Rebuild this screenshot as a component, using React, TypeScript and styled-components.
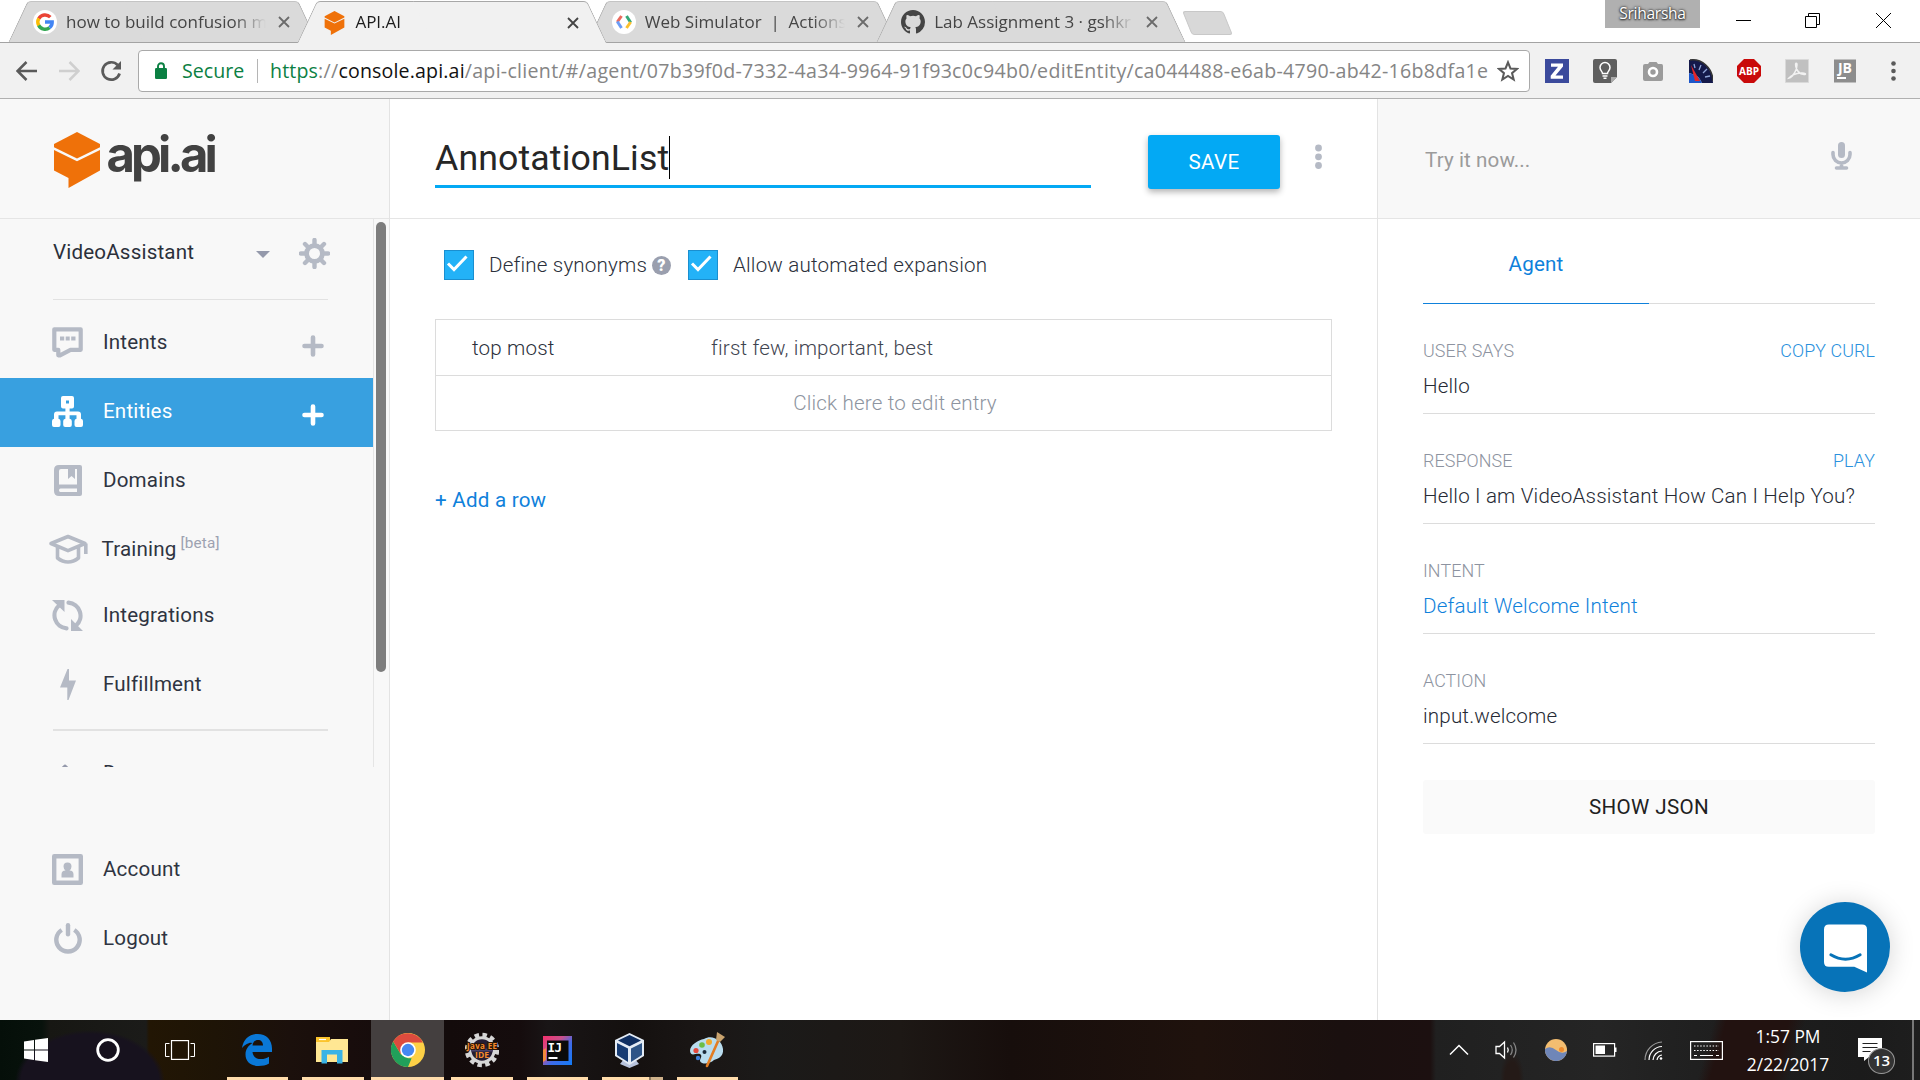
import React from "react";
import styled, { createGlobalStyle } from "styled-components";

const ui = `"Open Sans", "Noto Sans", sans-serif`;
const roboto = `Roboto, "Liberation Sans", sans-serif`;

const Global = createGlobalStyle`
  * { box-sizing: border-box; }
  html, body { margin: 0; padding: 0; overflow: hidden; background: #fff; }
  svg { display: block; flex: none; }
`;

const Screen = styled.div`
  width: 1920px;
  height: 1080px;
  display: flex;
  flex-direction: column;
  font-family: ${roboto};
  color: #2b303b;
  overflow: hidden;
`;

/* ---------- browser tabs ---------- */

const TabStrip = styled.div`
  height: 43px;
  flex: none;
  display: flex;
  align-items: flex-start;
  padding-left: 18px;
  background: #fff;
  border-bottom: 1px solid #a3a3a3;
`;

const Tab = styled.div<{ $active?: boolean }>`
  position: relative;
  z-index: ${(p) => (p.$active ? 2 : 1)};
  isolation: isolate;
  width: 289.4px;
  height: ${(p) => (p.$active ? 43 : 42)}px;
  flex: none;
  display: flex;
  align-items: center;
  padding: 2px 17.5px 0 15px;
  &::before,
  &::after {
    content: "";
    position: absolute;
    z-index: -1;
    top: 1px;
    bottom: 0;
    background: ${(p) => (p.$active ? "#f1f1f1" : "#dadada")};
    border-top: 1px solid ${(p) => (p.$active ? "#a8a8a8" : "#c4c4c4")};
  }
  &::before {
    left: 0;
    right: 40%;
    transform: skewX(-25deg);
    border-left: 1.5px solid #aaa;
    border-top-left-radius: 4px;
  }
  &::after {
    right: 0;
    left: 40%;
    transform: skewX(25deg);
    border-right: 1.5px solid #aaa;
    border-top-right-radius: 4px;
  }
`;

const TabIcon = styled.span`
  width: 24px;
  display: flex;
  justify-content: center;
`;

const TabTitle = styled.span<{ $active?: boolean }>`
  flex: 1;
  margin: -1px 0 0 9px;
  white-space: pre;
  font: 400 17px/26px ${ui};
  color: ${(p) => (p.$active ? "#1c1c1c" : "#454545")};
  mask-image: linear-gradient(to right, #000 168px, transparent 200px);
`;

const NewTab = styled.div`
  width: 41px;
  height: 24px;
  margin: 11px 0 0 11px;
  background: #d8d8d8;
  border: 1px solid #c8c8c8;
  border-radius: 3px;
  transform: skewX(22deg);
`;

const WindowControls = styled.div`
  margin-left: auto;
  display: flex;
  align-items: flex-start;
`;

const UserBadge = styled.div`
  width: 95px;
  height: 28px;
  background: #b0b0b0;
  color: #fff;
  font: 400 15.6px/27px ${ui};
  letter-spacing: -0.3px;
  text-align: center;
  text-shadow: 0 0 2px #333, 0 1px 2px #333, 0 0 3px #444;
`;

const ControlIcon = styled.div<{ $w: number; $indent?: number }>`
  width: ${(p) => p.$w}px;
  height: 41px;
  padding-left: ${(p) => p.$indent ?? 0}px;
  display: flex;
  align-items: center;
  justify-content: center;
`;

/* ---------- browser toolbar ---------- */

const Toolbar = styled.div`
  height: 56px;
  flex: none;
  display: flex;
  align-items: center;
  background: #f1f1f1;
  border-bottom: 1px solid #b0b0b0;
`;

const NavButtons = styled.div`
  width: 138px;
  padding-left: 16px;
  display: flex;
  align-items: center;
  gap: 19.5px;
`;

const AddressBar = styled.div`
  width: 1392px;
  height: 42px;
  display: flex;
  align-items: center;
  padding: 0 10px 0 16px;
  background: #fff;
  border: 1px solid #a9a9a9;
  border-radius: 4px;
  font: 400 19.6px/38px ${ui};
`;

const Secure = styled.span`
  color: #0b8043;
  margin-left: 15px;
  width: 75px;
`;

const Divider = styled.span`
  width: 1px;
  height: 24px;
  background: #b5b5b5;
  margin-right: 12px;
`;

const Url = styled.span`
  width: 1217px;
  white-space: nowrap;
  color: #858585;
  letter-spacing: 0.28px;
  margin-right: 10px;
`;

const Scheme = styled.span`
  color: #0b8043;
  letter-spacing: 0.15px;
`;

const Host = styled.span`
  color: #111;
  letter-spacing: 0.15px;
`;

const Extensions = styled.div`
  display: flex;
  align-items: center;
  gap: 24px;
  margin-left: 15px;
`;

/* ---------- page frame ---------- */

const Page = styled.div`
  height: 921px;
  flex: none;
  display: flex;
  background: #fff;
  letter-spacing: 0.17px;
`;

const Sidebar = styled.aside`
  width: 390px;
  flex: none;
  display: flex;
  flex-direction: column;
  background: #f8f8f8;
  border-right: 1px solid #e3e3e3;
`;

const Brand = styled.div`
  height: 120px;
  flex: none;
  display: flex;
  padding: 33px 0 0 54px;
  border-bottom: 1px solid #e5e5e5;
`;

const BrandName = styled.span`
  margin: -5px 0 0 6.5px;
  font: 700 49px/56px Inter, "Liberation Sans", sans-serif;
  letter-spacing: -3.9px;
  color: #424242;
`;

const ScrollArea = styled.div`
  height: 548px;
  flex: none;
  display: flex;
  overflow: hidden;
`;

const Menu = styled.nav`
  width: 374px;
  flex: none;
  border-right: 1px solid #e5e5e5;
`;

const ScrollThumb = styled.div`
  width: 10px;
  height: 450px;
  margin: 3px 0 0 2px;
  border-radius: 5px;
  background: #7d7d7d;
`;

const AgentRow = styled.div`
  height: 81px;
  display: flex;
  align-items: flex-start;
  margin: 0 45px 9px 53px;
  border-bottom: 1px solid #e2e2e2;
  font-size: 20.6px;
  line-height: 24px;
`;

const AgentName = styled.span`
  width: 203px;
  padding-top: 21px;
`;

const Caret = styled.span`
  border: 7px solid transparent;
  border-top-color: #9499ab;
  border-bottom: 0;
  margin: 32px 29px 0 0;
`;

const GearSlot = styled.span`
  margin-right: -3px;
  padding-top: 19px;
`;

const MenuRow = styled.div<{ $active?: boolean; $short?: boolean }>`
  width: 373px;
  height: ${(p) => (p.$short ? 66 : 69)}px;
  display: flex;
  align-items: center;
  padding: 0 49px ${(p) => (p.$short ? 0 : 3)}px 47.5px;
  font-size: 20.6px;
  line-height: 24px;
  font-weight: 400;
  background: ${(p) => (p.$active ? "#38a0e0" : "transparent")};
  color: ${(p) => (p.$active ? "#fff" : "#2f3441")};
`;

const IconSlot = styled.span<{ $tight?: boolean }>`
  width: 40px;
  display: flex;
  justify-content: center;
  margin-right: ${(p) => (p.$tight ? 14 : 15.5)}px;
`;

const PlusSlot = styled.span`
  margin: 7px 0 0 auto;
`;

const Beta = styled.sup`
  margin: -12px 0 0 4px;
  font-size: 15.3px;
  line-height: 18px;
  color: #9da2b1;
`;

const MenuRule = styled.div`
  height: 2px;
  margin: 9px 45px 9px 53px;
  background: #e2e2e2;
`;

const Footer = styled.div`
  padding-top: 69px;
`;

/* ---------- entity editor ---------- */

const Editor = styled.main`
  width: 987px;
  flex: none;
`;

const EditorHead = styled.header`
  height: 120px;
  display: flex;
  align-items: flex-start;
  padding-left: 45px;
  border-bottom: 1px solid #e5e5e5;
`;

const NameField = styled.div`
  width: 656px;
  height: 89px;
  display: flex;
  padding-top: 37px;
  border-bottom: 3px solid #03a9f4;
  font-size: 35.7px;
  line-height: 45px;
  letter-spacing: 0.12px;
  color: #262626;
`;

const TextCursor = styled.span`
  width: 1px;
  height: 43px;
  background: #000;
`;

const SaveButton = styled.button`
  width: 132px;
  height: 54px;
  margin: 36px 35px 0 57px;
  padding: 0;
  border: 0;
  border-radius: 3px;
  background: #03a9f4;
  color: #fff;
  font: 450 20.6px/54px ${roboto};
  letter-spacing: 0.35px;
  box-shadow: 0 3px 6px rgba(0, 0, 0, 0.3);
`;

const DotsSlot = styled.span`
  padding-top: 45px;
`;

const Options = styled.div`
  display: flex;
  align-items: center;
  height: 30px;
  margin: 31px 0 39px 54px;
  font-size: 20.6px;
  font-weight: 300;
  line-height: 30px;
`;

const Checkbox = styled.span`
  width: 30px;
  height: 30px;
  margin-right: 15px;
  border: 1px solid #1a8fd0;
  background: #23b2f7;
`;

const HelpIcon = styled.span`
  width: 19px;
  height: 19px;
  margin: 0 17px 0 auto;
  border-radius: 50%;
  background: #9a9fae;
  color: #fff;
  font: 900 16px/19px ${roboto};
  text-align: center;
`;

const SynonymsOption = styled.div`
  display: flex;
  align-items: center;
  width: 244px;
`;

const AutoOption = styled.div`
  display: flex;
  align-items: center;
`;

const EntryTable = styled.div`
  width: 897px;
  margin-left: 45px;
  border: 1px solid #dcdcdc;
  font-size: 20.6px;
  font-weight: 300;
  line-height: 24px;
`;

const EntryRow = styled.div<{ $hint?: boolean }>`
  height: 55px;
  display: flex;
  align-items: center;
  justify-content: ${(p) => (p.$hint ? "center" : "flex-start")};
  padding: 0 0 0 ${(p) => (p.$hint ? 23 : 36)}px;
  color: ${(p) => (p.$hint ? "#8d94a0" : "#3f4450")};
  & + & {
    border-top: 1px solid #dcdcdc;
  }
`;

const EntryKey = styled.span`
  width: 239px;
  color: #2b303b;
`;

const AddRow = styled.a`
  display: block;
  margin: 57px 0 0 45px;
  font-size: 20.6px;
  line-height: 24px;
  letter-spacing: 0.22px;
  color: #0f81db;
`;

/* ---------- test console ---------- */

const Console = styled.section`
  width: 543px;
  border-left: 1px solid #e3e3e3;
`;

const ConsoleHead = styled.div`
  height: 120px;
  display: flex;
  justify-content: space-between;
  align-items: flex-start;
  padding: 43px 68px 0 47px;
  background: #f8f8f8;
  border-bottom: 1px solid #e5e5e5;
  font-size: 20.6px;
  line-height: 36px;
  letter-spacing: 0.1px;
  color: #9b9b9b;
`;

const ConsoleBody = styled.div`
  padding: 0 45px;
`;

const AgentTabs = styled.div`
  height: 85px;
  display: flex;
  border-bottom: 1px solid #dcdcdc;
`;

const AgentTab = styled.div`
  width: 226px;
  height: 85px;
  border-bottom: 1px solid #0f81db;
  color: #0f81db;
  font-size: 20.6px;
  line-height: 91px;
  text-align: center;
`;

const Block = styled.div`
  height: 110px;
  padding-top: 35px;
  border-bottom: 1px solid #dcdcdc;
  font-weight: 300;
`;

const BlockHead = styled.div`
  display: flex;
  justify-content: space-between;
  font-size: 17.9px;
  line-height: 24px;
  letter-spacing: 0.08px;
  color: #8d93a0;
`;

const BlockLink = styled.a`
  color: #2a91dd;
`;

const BlockValue = styled.div<{ $link?: boolean }>`
  margin-top: 11px;
  font-size: 20.6px;
  line-height: 24px;
  letter-spacing: 0.17px;
  white-space: nowrap;
  color: ${(p) => (p.$link ? "#0f81db" : "#262a35")};
`;

const JsonButton = styled.button`
  display: block;
  width: 452px;
  height: 54px;
  margin-top: 36px;
  padding: 0;
  border: 0;
  border-radius: 3px;
  background: #fafafa;
  color: #212121;
  font: 400 20.6px/54px ${roboto};
  letter-spacing: 0.35px;
`;

const ChatBubble = styled.div`
  width: 90px;
  height: 90px;
  margin: 68px -15px 0 auto;
  padding: 3px 0 0 1px;
  border-radius: 50%;
  background: #0773b8;
  box-shadow: 0 2px 26px rgba(0, 0, 0, 0.17);
  display: flex;
  align-items: center;
  justify-content: center;
`;

/* ---------- taskbar ---------- */

const Taskbar = styled.footer`
  height: 60px;
  flex: none;
  display: flex;
  background:
    radial-gradient(ellipse 75px 52px at 90px 62px, #17121e 92%, transparent 100%),
    radial-gradient(ellipse 12px 30px at 1512px 60px, #241a17 60%, transparent 100%),
    linear-gradient(106deg, transparent 1648px, #221210 1660px, #221210 1720px, transparent 1736px),
    linear-gradient(90deg, #050f09 0, #08120c 42px, #171713 50px, #1b1b19 146px, #221604 149px, #1e1406 215px,
      #1b100c 290px, #180d0c 350px, #130b0b 450px, #150c0d 520px, #191516 548px, #14100f 630px, #1a1615 700px,
      #1b1a19 770px, #1d1815 900px, #170e0c 1010px, #1f120d 1200px, #1a100f 1340px, #1c1010 1430px,
      #202020 1436px, #252525 1600px, #222 1650px, #1e1e1e 1740px, #1b1b1b 1860px, #1e1e1e 1920px);
  color: #fff;
`;

const TaskItem = styled.div<{ $w: number; $open?: boolean; $active?: boolean; $stacked?: boolean; $end?: number }>`
  width: ${(p) => p.$w}px;
  height: 60px;
  flex: none;
  display: flex;
  align-items: center;
  justify-content: center;
  position: relative;
  padding-right: ${(p) => p.$end ?? 0}px;
  background: ${(p) => (p.$active ? "#443f3f" : "transparent")};
  &::after {
    content: "";
    display: ${(p) => (p.$open ? "block" : "none")};
    position: absolute;
    bottom: 0;
    left: ${(p) => (p.$active ? 0 : 7)}px;
    right: ${(p) => (p.$active ? 0 : 7)}px;
    height: 3px;
    background: ${(p) =>
      p.$stacked ? "linear-gradient(90deg, #ffdcab 47px, #8c7a60 47px, #8c7a60 49px, #cfb28b 49px)" : "#ffdcab"};
  }
`;

const Tray = styled.div`
  margin-left: auto;
  display: flex;
  align-items: center;
`;

const TraySlot = styled.div<{ $w: number }>`
  width: ${(p) => p.$w}px;
  display: flex;
  justify-content: center;
`;

const Clock = styled.div`
  width: 102px;
  font: 400 17.4px/28px ${ui};
  text-align: center;
  white-space: nowrap;
  padding-bottom: 1px;
`;

const Notifications = styled.div`
  width: 57px;
  height: 60px;
  margin-left: 7px;
  position: relative;
  padding: 18px 0 0 12px;
`;

const Count = styled.span`
  position: absolute;
  left: 22px;
  top: 28px;
  width: 27px;
  height: 26px;
  border: 1.5px solid #999;
  border-radius: 50%;
  background: #333;
  font: 600 15px/23px ${ui};
  text-align: center;
`;

const Peek = styled.div`
  width: 8px;
  height: 60px;
  margin-left: 9px;
  border-left: 2px solid #777;
`;

/* ---------- drawings ---------- */

const grey = "#b5bac5";

const CloseX = ({ color = "#666" }: { color?: string }) => (
  <svg width="12" height="12" viewBox="0 0 12 12" stroke={color} strokeWidth="1.8">
    <path d="M1 1l10 10M11 1L1 11" />
  </svg>
);

const GoogleIcon = () => (
  <svg width="24" height="24" viewBox="0 0 24 24" fill="none" strokeWidth="3.4">
    <circle cx="12" cy="12" r="12" fill="#fff" />
    <path d="M17.3 7.2A7.2 7.2 0 0 0 5.8 8.6" stroke="#ea4335" />
    <path d="M5.8 8.4a7.2 7.2 0 0 0 0 7.2" stroke="#fbbc05" />
    <path d="M5.7 15.4a7.2 7.2 0 0 0 10.9 2.2" stroke="#34a853" />
    <path d="M16.6 17.6A7 7 0 0 0 19.2 12H12" stroke="#4285f4" />
  </svg>
);

const Box = ({ w, h }: { w: number; h: number }) => (
  <svg width={w} height={h} viewBox="0 0 46 56" fill="#ef7109">
    <path d="M23 0L46 12v3.2L23 26.6 0 15.2V12z" />
    <path d="M0 18l23 11.3L46 18v20.5L14.5 56V46L0 38.5z" />
  </svg>
);

const ActionsIcon = () => (
  <svg width="24" height="24" viewBox="0 0 24 24" fill="none" strokeWidth="3">
    <circle cx="12" cy="12" r="12" fill="#fff" />
    <path d="M9.5 6L5.3 12" stroke="#ea6a5e" />
    <path d="M5.3 11.5l4.2 6.5" stroke="#6b9cf5" />
    <path d="M14.5 6l4.2 6.5" stroke="#34a879" />
    <path d="M18.7 12l-4.2 6" stroke="#fbc02d" />
  </svg>
);

const GithubIcon = () => (
  <svg width="24" height="24" viewBox="0 0 16 16" fill="#444">
    <path d="M8 0C3.58 0 0 3.58 0 8c0 3.54 2.29 6.53 5.47 7.59.4.07.55-.17.55-.38 0-.19-.01-.82-.01-1.49-2.01.37-2.53-.49-2.69-.94-.09-.23-.48-.94-.82-1.13-.28-.15-.68-.52-.01-.53.63-.01 1.08.58 1.23.82.72 1.21 1.87.87 2.33.66.07-.52.28-.87.51-1.07-1.78-.2-3.64-.89-3.64-3.95 0-.87.31-1.59.82-2.15-.08-.2-.36-1.02.08-2.12 0 0 .67-.21 2.2.82a7.6 7.6 0 0 1 4 0c1.53-1.04 2.2-.82 2.2-.82.44 1.1.16 1.92.08 2.12.51.56.82 1.27.82 2.15 0 3.07-1.87 3.75-3.65 3.95.29.25.54.73.54 1.48 0 1.07-.01 1.93-.01 2.2 0 .21.15.46.55.38A8 8 0 0 0 16 8c0-4.42-3.58-8-8-8z" />
  </svg>
);

const Arrow = ({ color, flip }: { color: string; flip?: boolean }) => (
  <svg width="22" height="22" viewBox="0 0 22 22" fill="none" stroke={color} strokeWidth="2.5">
    <path d={flip ? "M1 11h19M11.5 2l9 9-9 9" : "M21 11H2M10.5 2l-9 9 9 9"} />
  </svg>
);

const Reload = () => (
  <svg width="24" height="24" viewBox="0 0 24 24" fill="none" stroke="#5a5a5a" strokeWidth="2.7">
    <path d="M20.6 14.5A8.7 8.7 0 1 1 18.6 6" />
    <path d="M22 2v8.5h-8.5z" fill="#5a5a5a" stroke="none" />
  </svg>
);

const Lock = () => (
  <svg width="12" height="17" viewBox="0 0 12 17">
    <rect y="6" width="12" height="11" rx="1.2" fill="#0b8043" />
    <path d="M3 7V4.2a3 3 0 0 1 6 0V7" fill="none" stroke="#0b8043" strokeWidth="1.9" />
  </svg>
);

const Star = () => (
  <svg width="22" height="22" viewBox="0 0 24 24" fill="none" stroke="#5a5a5a" strokeWidth="2.2">
    <path d="M12 2.5l2.7 6.7 7.200.5-5.5 4.6 1.8 7L12 17.4l-6.2 3.9 1.8-7L2.1 9.700l7.2-.5z" />
  </svg>
);

const svgText = (size: number, weight = 700) => ({
  fontFamily: "Open Sans, sans-serif",
  fontSize: size,
  fontWeight: weight,
});

const ExtensionIcons = () => (
  <Extensions>
    <svg width="24" height="24" viewBox="0 0 24 24">
      <path d="M0 0h24v24H0z" fill="#3b4a9c" />
      <path d="M6 4.5h12v3L10.5 16.5H18v3.2H5.7v-3L13 7.700H6z" fill="#fff" />
    </svg>
    <svg width="24" height="24" viewBox="0 0 24 24">
      <path d="M2 0h20q2 0 2 2v16l-6 6H2q-2 0-2-2V2q0-2 2-2z" fill="#5f5f5f" />
      <path d="M18 24v-6h6z" fill="#aaa" />
      <path d="M9.5 14.5c0-2-2.5-3-2.5-6a5 5 0 0 1 10 0c0 3-2.5 4-2.5 6zM9.5 17h5M10.5 19.3h3" fill="none" stroke="#fff" strokeWidth="1.5" />
    </svg>
    <svg width="24" height="24" viewBox="0 0 24 24">
      <path d="M7 5l1.5-2h7L17 5h3.500Q22 5 22 7v13q0 2-2 2H4q-2 0-2-2V7q0-2 2-2z" fill="#9b9b9b" />
      <circle cx="12" cy="13" r="4" fill="#9b9b9b" stroke="#fff" strokeWidth="2.6" />
    </svg>
    <svg width="24" height="24" viewBox="0 0 24 24">
      <path d="M0 1C13-1 24 9 24 24H13Q10 16 0 14z" fill="#14194a" />
      <path d="M0 14q10 2 13 10H0z" fill="#1d56c9" />
      <path d="M5 5l1 4M12 6l-2 5M18 10l-4 4M21 17l-5 1" stroke="#8fa5d8" strokeWidth="1.3" />
      <path d="M2 6l4 16h5z" fill="#e5262a" />
      <path d="M1 1C13-.5 23.500 9 24 22" stroke="#333" strokeWidth="1.5" fill="none" />
    </svg>
    <svg width="24" height="24" viewBox="0 0 24 24">
      <path d="M7 0h10l7 7v10l-7 7H7l-7-7V7z" fill="#c90a0a" />
      <text x="12" y="16" textAnchor="middle" fill="#fff" {...svgText(11)} textLength="20" lengthAdjust="spacingAndGlyphs">ABP</text>
    </svg>
    <svg width="24" height="24" viewBox="0 0 24 24">
      <path d="M.5.5h23v23H.5z" fill="#c0c0c0" stroke="#d9d9d9" />
      <path d="M4 19c4-1 8-8 8-13 0-3-2-2-1.300 1 1 5 4 8 8.300 8.500 3 0 1-2-3-1.500-4 .3-9 1.500-12 5z" fill="none" stroke="#f2f2f2" strokeWidth="1.5" />
    </svg>
    <svg width="24" height="24" viewBox="0 0 24 24">
      <path d="M1 .5h22v23H1z" fill="#8d8d8d" />
      <text x="12" y="13.5" textAnchor="middle" fill="#fff" {...svgText(14)}>JB</text>
      <path d="M4 18h9v2H4z" fill="#fff" />
    </svg>
    <svg width="24" height="24" viewBox="0 0 24 24" fill="#5a5a5a">
      <circle cx="12.5" cy="4.5" r="2.3" />
      <circle cx="12.5" cy="12" r="2.3" />
      <circle cx="12.5" cy="19.5" r="2.3" />
    </svg>
  </Extensions>
);

const Gear = () => (
  <svg width="31" height="31" viewBox="0 0 31 31" fill="none" stroke={grey}>
    <circle cx="15.5" cy="15.5" r="7.9" strokeWidth="4.8" />
    <path
      d="M15.5 2v4M15.5 25v4M2 15.5h4M25 15.5h4M6 6l2.7 2.7M22.3 22.300L25 25M25 6l-2.7 2.7M6 25l2.7-2.7"
      strokeWidth="4.4"
      strokeLinecap="round"
    />
  </svg>
);

const Plus = ({ color = grey }: { color?: string }) => (
  <svg width="22" height="22" viewBox="0 0 22 22" stroke={color} strokeWidth="4.6" strokeLinecap="round">
    <path d="M11 2.5v17M2.500 11h17" />
  </svg>
);

const IntentsIcon = () => (
  <svg width="31" height="31" viewBox="0 0 31 31" fill="none" stroke={grey}>
    <path d="M2.300 2.300h26.400v20.500H18.500L8 28.300H6.300v-5.500h-4z" strokeWidth="4.2" strokeLinejoin="round" />
    <path d="M8 11.500h4.200M13.700 11.500h4M19.200 11.500h4.300" strokeWidth="4.2" />
  </svg>
);

const EntitiesIcon = () => (
  <svg width="31" height="31" viewBox="0 0 31 31" fill="#fff">
    <path d="M11 0h9q2 0 2 2v8.500q0 2-2 2h-2.400v3H26q3 0 3 3v4.300q2 .4 2 2.200v4q0 2-2 2h-4.500q-2 0-2-2v-4q0-1.800 2-2.200v-3.500h-6.900v3.500q2.200.4 2.200 2.200v4q0 2-2 2h-4.600q-2 0-2-2v-4q0-1.800 2.200-2.200v-3.500H6.500v3.500q2 .4 2 2.200v4q0 2-2 2H2q-2 0-2-2v-4q0-1.800 2-2.200v-4.300q0-3 3-3h8.400v-3H11q-2 0-2-2V2q0-2 2-2z" />
    <path d="M14 4.500h3v3h-3z" fill="#38a0e0" />
  </svg>
);

const DomainsIcon = () => (
  <svg width="28" height="31" viewBox="0 0 28 31">
    <path
      fillRule="evenodd"
      fill={grey}
      d="M5 0h21q2 0 2 2v27q0 2-2 2H5q-5 0-5-5V5q0-5 5-5zM7 4q-2 0-2 2v13.500h18V4h-2v10l-3.500-3-3.500 3V4zM6.500 23.500q-1.500 0-1.500 1.800t1.500 1.700H23v-3.500z"
    />
  </svg>
);

const TrainingIcon = () => (
  <svg width="40" height="30" viewBox="0 0 40 30" fill="none" stroke={grey} strokeWidth="3.6" strokeLinejoin="round">
    <path d="M3 9.500L20 2.500l17 7-17 7.200z" />
    <path d="M9.500 13v11q5 4 10.500 4t10.500-4V13M37.800 9.500V20" />
  </svg>
);

const IntegrationsIcon = () => (
  <svg width="31" height="31" viewBox="0 0 31 31">
    <path d="M14.500 28.300A13 13 0 0 1 7 5.500M16.500 2.700A13 13 0 0 1 24 25.500" fill="none" stroke={grey} strokeWidth="4.2" strokeLinecap="round" />
    <path d="M0 0h12.500v12zM31 31H19V19z" fill={grey} />
  </svg>
);

const BoltIcon = () => (
  <svg width="16" height="31" viewBox="0 0 16 31" fill={grey}>
    <path d="M7.500 0H9v11.500h7L8.500 31H7.300V18.500H0z" />
  </svg>
);

const DocsIcon = () => (
  <svg width="31" height="31" viewBox="0 0 31 31" fill="none" stroke="#9499ab" strokeWidth="4.5" strokeLinejoin="round">
    <path d="M13 9l9 9-9 9-9-9z" />
  </svg>
);

const AccountIcon = () => (
  <svg width="31" height="31" viewBox="0 0 31 31">
    <rect x="2.2" y="2.2" width="26.6" height="26.6" fill="none" stroke={grey} strokeWidth="4.4" strokeLinejoin="round" />
    <path d="M9.500 23.500v-3q0-4 4-4-2-1.500-2-4a4 4 0 0 1 8 0q0 2.500-2 4 4 0 4 4v3z" fill={grey} />
  </svg>
);

const LogoutIcon = () => (
  <svg width="28" height="31" viewBox="0 0 28 31" fill="none" stroke={grey} strokeWidth="4.4">
    <path d="M7.700 7A11.700 11.700 0 1 0 20.300 7" />
    <path d="M14 2.200v9" strokeLinecap="round" />
  </svg>
);

const Check = () => (
  <svg width="28" height="28" viewBox="0 0 28 28" fill="none" stroke="#fff" strokeWidth="3">
    <path d="M3 12.500l6 6L21.500 5.500" />
  </svg>
);

const Dots = () => (
  <svg width="7" height="26" viewBox="0 0 7 26" fill={grey}>
    <circle cx="3.5" cy="4" r="3.4" />
    <circle cx="3.5" cy="12.8" r="3.4" />
    <circle cx="3.5" cy="21.5" r="3.4" />
  </svg>
);

const Mic = () => (
  <svg width="21" height="28" viewBox="0 0 21 28">
    <rect x="7" y="0" width="7" height="16" rx="3.5" fill={grey} />
    <path d="M2 10.500v2a8.500 8.500 0 0 0 17 0v-2M10.500 21v4M5.500 26h10" fill="none" stroke={grey} strokeWidth="3.6" strokeLinecap="round" />
  </svg>
);

const ChatIcon = () => (
  <svg width="43" height="50" viewBox="0 0 44 50">
    <path d="M5 0h34q5 0 5 5v44l-13-5.800H5q-5 0-5-5V5q0-5 5-5z" fill="#fff" />
    <path d="M7 31q15 9 30 0" fill="none" stroke="#0773b8" strokeWidth="3" strokeLinecap="round" />
  </svg>
);

const WindowsIcon = () => (
  <svg width="24" height="24" viewBox="0 0 24 24" fill="#fff">
    <path d="M0 3.500L10 2v9.500H0zM11 1.800L24 0v11.500H11zM0 12.500h10V22L0 20.500zM11 12.500h13V24l-13-1.800z" />
  </svg>
);

const CortanaIcon = () => (
  <svg width="24" height="24" viewBox="0 0 24 24">
    <circle cx="12" cy="12" r="10.3" fill="none" stroke="#fff" strokeWidth="2.8" />
  </svg>
);

const TaskViewIcon = () => (
  <svg width="30" height="20" viewBox="0 0 30 20" fill="none" stroke="#fff">
    <rect x="6.5" y=".6" width="17" height="18.8" strokeWidth="1.2" />
    <path d="M4.500 3.500h-4v13h4M25.500 3.500h4v13h-4" />
  </svg>
);

const EdgeIcon = () => (
  <svg width="30" height="32" viewBox="0 0 30 32" fill="#0a78d7">
    <path d="M0 14C1.500 5 7.500 0 15.500 0 24.500 0 30 6 30 14.500V18H10.500c.5 5 4 7 8.500 7 3 0 5.500-.8 8-2.300v6.800c-3 1.800-6.500 2.500-10.500 2.500C8.500 32 3.500 27.500 3.500 20.500c0-5.500 3-9.500 8-12C6.500 8.500 2.500 10.500 0 14zm10.500-2.500H21c0-3.500-2-5.500-5-5.500s-5 2-5.500 5.500z" />
  </svg>
);

const FolderIcon = () => (
  <svg width="32" height="27" viewBox="0 0 32 27">
    <path d="M0 0h14v5H0z" fill="#fbc42c" />
    <path d="M3 2.500h7" stroke="#fff" strokeWidth="1.2" />
    <path d="M0 5h13l2-3h17v23H0z" fill="#ffe793" />
    <path d="M5.500 13h21v13.500H21V17.500H11v9H5.500z" fill="#3ab3e5" />
  </svg>
);

const ChromeIcon = () => (
  <svg width="34" height="34" viewBox="0 0 33 33">
    <circle cx="16.5" cy="16.5" r="16.5" fill="#fdd046" />
    <path d="M16.500 33A16.500 16.500 0 0 1 2.200 8.200L9.500 20.600l7 4 3.500 0L16.500 33z" fill="#21a05a" />
    <path d="M2.200 8.200a16.500 16.500 0 0 1 28.700 1H16.500L9.400 20.500z" fill="#dd4b3e" />
    <circle cx="16.5" cy="16.5" r="7.6" fill="#fff" />
    <circle cx="16.5" cy="16.5" r="6" fill="#4688f1" />
  </svg>
);

const JavaIdeIcon = () => (
  <svg width="34" height="36" viewBox="0 0 34 36">
    <circle cx="17" cy="18" r="15" fill="none" stroke="#d6d6d6" strokeWidth="4.500" strokeDasharray="4.400 3.454" />
    <circle cx="17" cy="18" r="12.200" fill="#251d33" stroke="#d6d6d6" strokeWidth="3" />
    <path d="M6 18h22" stroke="#4a4168" strokeWidth="3" />
    <text x="17" y="17" textAnchor="middle" fill="#f58a2c" stroke="#2a1608" strokeWidth="2" paintOrder="stroke" {...svgText(8)} textLength="30">Java EE</text>
    <text x="17" y="25.500" textAnchor="middle" fill="#f58a2c" {...svgText(8.5)}>IDE</text>
  </svg>
);

const IntelliJIcon = () => (
  <svg width="29" height="29" viewBox="0 0 29 29">
    <defs>
      <linearGradient id="ij" x1="0" y1="0" x2="1" y2="1">
        <stop offset="0" stopColor="#f5306c" />
        <stop offset=".35" stopColor="#c8508c" />
        <stop offset=".6" stopColor="#3f6be8" />
        <stop offset="1" stopColor="#127bf5" />
      </linearGradient>
    </defs>
    <path d="M0 0h29v29H0z" fill="url(#ij)" />
    <path d="M0 14l3-2v12l-3 2z" fill="#f48a3c" />
    <path d="M4 4.500h21.500v20.500H4z" fill="#0a0a0a" />
    <text y="15.500" fill="#fff" fontFamily="DejaVu Sans Mono, monospace" fontSize="12.5" fontWeight="700">
      <tspan x="4.500">I</tspan>
      <tspan x="11.500">J</tspan>
    </text>
    <path d="M5.500 21h9v2h-9z" fill="#fff" />
  </svg>
);

const VBoxIcon = () => (
  <svg width="31" height="35" viewBox="0 0 31 35">
    <path d="M10 26h11l4 5-9.500 4L6 31z" fill="#b8c4dd" />
    <path d="M15.500 0L30 7v16l-14.500 9L1 23V7z" fill="#e3ebf5" />
    <path d="M15.500 2L27 7.500l-11.500 5.800L4 7.500z" fill="#0f2f63" />
    <path d="M3 10l11 5.500V29L3 22z" fill="#163b73" />
    <path d="M28 10l-11 5.500V29l11-7z" fill="#2d5487" />
  </svg>
);

const PaintIcon = () => (
  <svg width="36" height="36" viewBox="0 0 36 36">
    <path d="M14 7C22 2 32 8 33 17c1 8-6 10-9 11-4 4-12 5-14 1 0-3 3-5 0-7C5 21 1 25 0 19 0 13 8 8 14 7z" fill="#b9dcee" />
    <circle cx="12" cy="13" r="2.8" fill="#6dbe45" />
    <circle cx="6" cy="18.5" r="2.6" fill="#e5483d" />
    <circle cx="19" cy="10" r="3" fill="#f3a92a" />
    <circle cx="14.5" cy="20" r="2" fill="#1b2a3a" />
    <circle cx="8" cy="26" r="2.2" fill="#3d7edb" />
    <path d="M29 7L17 34" stroke="#e27c22" strokeWidth="2.6" strokeLinecap="round" />
    <path d="M27 0l8 5-5 5-4-2z" fill="#c9a36e" />
  </svg>
);

const Speaker = () => (
  <svg width="24" height="20" viewBox="0 0 24 20" fill="none" stroke="#fff" strokeWidth="1.3">
    <path d="M1 6.500h3.500L9.500 2v16l-5-4.500H1z" />
    <path d="M12.500 7.500q1.500 2.500 0 5" />
    <path d="M15.500 5q3.500 5 0 10M18.500 2.500q5 7.500 0 15" stroke="#858585" />
  </svg>
);

const Ball = () => (
  <svg width="22" height="22" viewBox="0 0 22 22">
    <circle cx="11" cy="11" r="11" fill="#f3bd70" />
    <path d="M0 10q5-4 11 1 6 5 11 1A11 11 0 0 1 0 10z" fill="#6f86b8" />
    <circle cx="16.5" cy="10.5" r="2.5" fill="#ef8b2d" />
  </svg>
);

const Battery = () => (
  <svg width="24" height="14" viewBox="0 0 24 14">
    <rect x=".6" y=".6" width="21" height="12.5" fill="none" stroke="#fff" strokeWidth="1.2" />
    <path d="M2.500 2.500h9.500v8.500H2.500zM22 4.500h1.500v4.500H22z" fill="#fff" />
  </svg>
);

const Wifi = () => (
  <svg width="19" height="19" viewBox="0 0 19 19" fill="none" stroke="#fff" strokeWidth="1.2">
    <path d="M1 19A18 18 0 0 1 18 1" stroke="#999" />
    <path d="M5 19A13.500 13.500 0 0 1 18 5.500M9 19a9.500 9.500 0 0 1 9-9M13 19a6 6 0 0 1 5-5" />
    <circle cx="17" cy="17.5" r="1.3" fill="#fff" stroke="none" />
  </svg>
);

const Keyboard = () => (
  <svg width="33" height="19" viewBox="0 0 33 19" fill="none" stroke="#fff" strokeWidth="1.2">
    <rect x=".6" y=".6" width="31.8" height="17.8" />
    <path d="M4 5h25M4 9.500h25" strokeDasharray="1.5 1.6" />
    <path d="M4 14.500h3M10 14.500h13M26 14.500h3" />
  </svg>
);

/* ---------- data ---------- */

const tabs = [
  { title: "how to build confusion m", icon: <GoogleIcon /> },
  { title: "API.AI", icon: <Box w={21} h={24} />, active: true },
  { title: "Web Simulator  |  Actions", icon: <ActionsIcon /> },
  { title: "Lab Assignment 3 · gshkr", icon: <GithubIcon /> },
];

const results = [
  { label: "USER SAYS", action: "COPY CURL", value: "Hello" },
  { label: "RESPONSE", action: "PLAY", value: "Hello I am VideoAssistant How Can I Help You?" },
  { label: "INTENT", value: "Default Welcome Intent", link: true },
  { label: "ACTION", value: "input.welcome" },
];

const taskApps = [
  { w: 75, icon: <EdgeIcon />, end: 1 },
  { w: 76, icon: <FolderIcon />, end: 2 },
  { w: 73, icon: <ChromeIcon />, active: true },
  { w: 76, icon: <JavaIdeIcon /> },
  { w: 75, icon: <IntelliJIcon />, end: 1 },
  { w: 75, icon: <VBoxIcon />, end: 6, stacked: true },
  { w: 75, icon: <PaintIcon /> },
];

export default function App() {
  return (
    <Screen>
      <Global />
      <TabStrip>
        {tabs.map((t) => (
          <Tab key={t.title} $active={t.active}>
            <TabIcon>{t.icon}</TabIcon>
            <TabTitle $active={t.active}>{t.title}</TabTitle>
            <CloseX color={t.active ? "#444" : "#6b6b6b"} />
          </Tab>
        ))}
        <NewTab />
        <WindowControls>
          <UserBadge>Sriharsha</UserBadge>
          <ControlIcon $w={87}>
            <svg width="15" height="15" stroke="#000"><path d="M0 7.500h15" /></svg>
          </ControlIcon>
          <ControlIcon $w={51}>
            <svg width="15" height="15" fill="none" stroke="#000">
              <path d="M.5 3.500h11v11H.5zM3.500 3.500v-3h11v11h-3" />
            </svg>
          </ControlIcon>
          <ControlIcon $w={82} $indent={9}>
            <svg width="15" height="15" stroke="#000"><path d="M0 0l15 15M15 0L0 15" /></svg>
          </ControlIcon>
        </WindowControls>
      </TabStrip>

      <Toolbar>
        <NavButtons>
          <Arrow color="#5a5a5a" />
          <Arrow color="#cfcfcf" flip />
          <Reload />
        </NavButtons>
        <AddressBar>
          <Lock />
          <Secure>Secure</Secure>
          <Divider />
          <Url>
            <Scheme>https</Scheme>://<Host>console.api.ai</Host>
            /api-client/#/agent/07b39f0d-7332-4a34-9964-91f93c0c94b0/editEntity/ca044488-e6ab-4790-ab42-16b8dfa1e
          </Url>
          <Star />
        </AddressBar>
        <ExtensionIcons />
      </Toolbar>

      <Page>
        <Sidebar>
          <Brand>
            <Box w={46} h={56} />
            <BrandName>api.ai</BrandName>
          </Brand>
          <ScrollArea>
            <Menu>
              <AgentRow>
                <AgentName>VideoAssistant</AgentName>
                <Caret />
                <GearSlot><Gear /></GearSlot>
              </AgentRow>
              <MenuRow>
                <IconSlot><IntentsIcon /></IconSlot>Intents
                <PlusSlot><Plus /></PlusSlot>
              </MenuRow>
              <MenuRow $active>
                <IconSlot><EntitiesIcon /></IconSlot>Entities
                <PlusSlot><Plus color="#fff" /></PlusSlot>
              </MenuRow>
              <MenuRow><IconSlot><DomainsIcon /></IconSlot>Domains</MenuRow>
              <MenuRow $short><IconSlot $tight><TrainingIcon /></IconSlot>Training<Beta>[beta]</Beta></MenuRow>
              <MenuRow><IconSlot><IntegrationsIcon /></IconSlot>Integrations</MenuRow>
              <MenuRow><IconSlot><BoltIcon /></IconSlot>Fulfillment</MenuRow>
              <MenuRule />
              <MenuRow><IconSlot><DocsIcon /></IconSlot>Docs</MenuRow>
            </Menu>
            <ScrollThumb />
          </ScrollArea>
          <Footer>
            <MenuRow><IconSlot><AccountIcon /></IconSlot>Account</MenuRow>
            <MenuRow><IconSlot><LogoutIcon /></IconSlot>Logout</MenuRow>
          </Footer>
        </Sidebar>

        <Editor>
          <EditorHead>
            <NameField>AnnotationList<TextCursor /></NameField>
            <SaveButton>SAVE</SaveButton>
            <DotsSlot><Dots /></DotsSlot>
          </EditorHead>
          <Options>
            <SynonymsOption>
              <Checkbox><Check /></Checkbox>Define synonyms
              <HelpIcon>?</HelpIcon>
            </SynonymsOption>
            <AutoOption>
              <Checkbox><Check /></Checkbox>Allow automated expansion
            </AutoOption>
          </Options>
          <EntryTable>
            <EntryRow>
              <EntryKey>top most</EntryKey>first few, important, best
            </EntryRow>
            <EntryRow $hint>Click here to edit entry</EntryRow>
          </EntryTable>
          <AddRow>+ Add a row</AddRow>
        </Editor>

        <Console>
          <ConsoleHead>Try it now...<Mic /></ConsoleHead>
          <ConsoleBody>
            <AgentTabs><AgentTab>Agent</AgentTab></AgentTabs>
            {results.map((r) => (
              <Block key={r.label}>
                <BlockHead>{r.label}{r.action && <BlockLink>{r.action}</BlockLink>}</BlockHead>
                <BlockValue $link={r.link}>{r.value}</BlockValue>
              </Block>
            ))}
            <JsonButton>SHOW JSON</JsonButton>
            <ChatBubble><ChatIcon /></ChatBubble>
          </ConsoleBody>
        </Console>
      </Page>

      <Taskbar>
        <TaskItem $w={72}><WindowsIcon /></TaskItem>
        <TaskItem $w={72}><CortanaIcon /></TaskItem>
        <TaskItem $w={76} $end={4}><TaskViewIcon /></TaskItem>
        {taskApps.map((a, i) => (
          <TaskItem key={i} $w={a.w} $open $active={a.active} $stacked={a.stacked} $end={a.end}>
            {a.icon}
          </TaskItem>
        ))}
        <Tray>
          <TraySlot $w={44}>
            <svg width="20" height="12" fill="none" stroke="#fff" strokeWidth="1.5"><path d="M1 10.500l9-9 9 9" /></svg>
          </TraySlot>
          <TraySlot $w={52}><Speaker /></TraySlot>
          <TraySlot $w={45}><Ball /></TraySlot>
          <TraySlot $w={53}><Battery /></TraySlot>
          <TraySlot $w={44}><Wifi /></TraySlot>
          <TraySlot $w={62}><Keyboard /></TraySlot>
          <Clock>1:57 PM<br />2/22/2017</Clock>
          <Notifications>
            <svg width="24" height="24" viewBox="0 0 24 24">
              <path d="M0 0h24v19H11l-5 4v-4H0z" fill="#fff" />
              <path d="M4.500 5.500h15M4.500 9.500h15M4.500 13.500h8" stroke="#222" strokeWidth="1.2" />
            </svg>
            <Count>13</Count>
          </Notifications>
          <Peek />
        </Tray>
      </Taskbar>
    </Screen>
  );
}
